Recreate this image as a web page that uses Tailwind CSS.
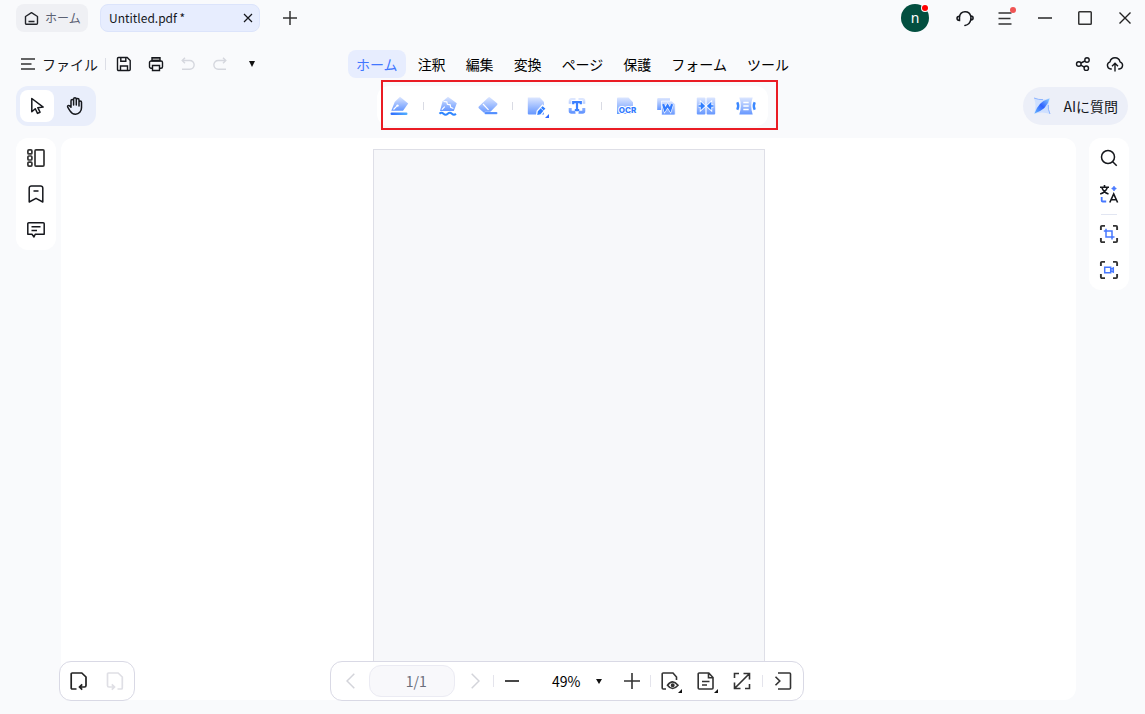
<!DOCTYPE html>
<html lang="ja">
<head>
  <meta charset="UTF-8" />
  <meta name="viewport" content="width=device-width, initial-scale=1.0"/>
  <title>Untitled.pdf</title>
  <script src="https://cdn.jsdelivr.net/npm/@tailwindcss/browser@4"></script>
</head>
<body class="h-screen overflow-hidden flex flex-col bg-[#f9fafc] text-[#15171c] text-sm font-['Noto_Sans_CJK_JP',sans-serif]">
  <!-- shared gradients for the toolbar icons -->
  <svg class="absolute size-0" aria-hidden="true">
    <defs>
      <linearGradient id="soft" x1="0" y1="0" x2="0" y2="1"><stop offset="0" stop-color="#dce6ff"/><stop offset="1" stop-color="#6697ff"/></linearGradient>
      <linearGradient id="deep" x1="0" y1="0" x2="1" y2="0"><stop offset="0" stop-color="#2f6bff"/><stop offset="1" stop-color="#52b0ff"/></linearGradient>
      <linearGradient id="leaf" x1="0" y1="1" x2="1" y2="0"><stop offset="0" stop-color="#63b4ff"/><stop offset=".5" stop-color="#2f62ff"/><stop offset="1" stop-color="#8fd0ff"/></linearGradient>
    </defs>
  </svg>

  <!-- title bar -->
  <header class="h-9 shrink-0 flex items-center justify-between pl-4">
    <div class="flex items-center">
      <button class="h-7 w-18 flex items-center gap-1.5 pl-2 rounded-lg bg-[#eff0f4] text-[#5b6173] text-xs">
        <svg class="size-[15px] text-[#22242a]" viewBox="0 0 15 15" fill="none" stroke="currentColor" stroke-width="1.4"><path d="M1.5 5.5 7.5 1.7l6 3.8v6.8a1 1 0 0 1-1 1h-10a1 1 0 0 1-1-1zM4.5 10.5h6" stroke-linejoin="round"/></svg>
        ホーム
      </button>
      <div class="h-7 w-40 ml-3 flex items-center justify-between pl-2 pr-1.5 rounded-lg border border-[#dce4fb] bg-[#e7edfe] text-xs">
        <span>Untitled.pdf *</span>
        <button aria-label="タブを閉じる"><svg class="size-[10px]" viewBox="0 0 10 10" fill="none" stroke="currentColor" stroke-width="1.2"><path d="m1 1 8 8M9 1 1 9"/></svg></button>
      </div>
      <button class="size-7 ml-4 grid place-items-center" aria-label="新しいタブ"><svg class="size-[14px]" viewBox="0 0 14 14" fill="none" stroke="#333" stroke-width="1.5"><path d="M7 0v14M0 7h14"/></svg></button>
    </div>
    <div class="flex items-center">
      <button class="relative size-7 mr-4 rounded-full bg-[#034f40] text-white font-['Noto_Sans',sans-serif]" aria-label="アカウント">n<span class="absolute top-px right-px size-1.5 rounded-full bg-[#ff0000] ring-1 ring-white"></span></button>
      <button class="w-10 h-9 grid place-items-center" aria-label="サポート">
        <svg class="size-[18px]" viewBox="0 0 18 18" fill="none" stroke="currentColor" stroke-width="1.5"><path d="M3.5 7.5a5.7 5.7 0 0 1 11.2-.4M14.9 10c-.5 3.400-2.600 6-6 6.500" stroke-linecap="round"/><path d="M3.500 7.200v4.200c-1.600 0-2.500-.8-2.500-2.100s.9-2.100 2.500-2.100zM14.900 6.900v4c1.400 0 2.200-.8 2.200-2s-.8-2-2.200-2z"/></svg>
      </button>
      <button class="relative w-10 h-9 grid place-items-center" aria-label="メニュー">
        <svg class="w-[14px] h-[13px]" viewBox="0 0 14 13" fill="none" stroke="#333" stroke-width="1.6"><path d="M.5 1h13M.5 6.500h12M.5 12h13"/></svg>
        <span class="absolute top-[7px] right-[9px] size-1.5 rounded-full bg-[#f05454]"></span>
      </button>
      <button class="w-10 h-9 grid place-items-center" aria-label="最小化"><svg class="size-[14px]" viewBox="0 0 14 14"><path d="M0 7h14" stroke="#333" stroke-width="1.6"/></svg></button>
      <button class="w-10 h-9 grid place-items-center" aria-label="最大化"><svg class="size-[14px]" viewBox="0 0 14 14"><rect x=".75" y=".75" width="12.500" height="12.500" rx=".8" fill="none" stroke="#333" stroke-width="1.500"/></svg></button>
      <button class="w-10 h-9 grid place-items-center" aria-label="閉じる"><svg class="size-[12px]" viewBox="0 0 12 12" fill="none" stroke="#222" stroke-width="1.4"><path d="m.5.5 11 11M11.500.5l-11 11"/></svg></button>
    </div>
  </header>

  <!-- menu row -->
  <div class="mt-3 h-8 shrink-0 grid grid-cols-[1fr_auto_1fr] items-center px-5">
    <div class="flex items-center">
      <button class="flex items-center gap-1.5">
        <svg class="w-4 h-3" viewBox="0 0 16 12" fill="none" stroke="#333" stroke-width="1.700"><path d="M1 1h14M1 6h10.500M1 11h14"/></svg>
        ファイル
      </button>
      <span class="w-px h-3 ml-[7px] mr-0.5 bg-[#dcdee6]"></span>
      <button class="size-8 grid place-items-center" aria-label="保存">
        <svg class="size-4" viewBox="0 0 16 16" fill="none" stroke="currentColor" stroke-width="1.400"><path d="M2.500 1.500h8.700l3 3v9a1 1 0 0 1-1 1H2.500a1 1 0 0 1-1-1v-11a1 1 0 0 1 1-1zM4.500 14.300V10h7v4.300M4.800 1.500v3.700h5V1.500"/></svg>
      </button>
      <button class="size-8 grid place-items-center" aria-label="印刷">
        <svg class="size-4" viewBox="0 0 16 16" fill="none" stroke="currentColor" stroke-width="1.400"><path d="M4.500 12.200H3a1.500 1.500 0 0 1-1.500-1.500V6.500A1.500 1.500 0 0 1 3 5h10a1.500 1.500 0 0 1 1.500 1.500v4.200a1.500 1.500 0 0 1-1.500 1.500h-1.500"/><path d="M4.500 9.500h7v5h-7z"/><path d="M4 4.700V1.800h8v2.900z" fill="#999"/></svg>
      </button>
      <button class="size-8 grid place-items-center text-[#d5d7de]" aria-label="元に戻す" disabled>
        <svg class="size-4" viewBox="0 0 16 16" fill="none" stroke="currentColor" stroke-width="1.400"><path d="M5 1.700 2.200 4.500 5 7.300M2.500 4.500h7.300a4.300 4.300 0 0 1 0 8.700H2"/></svg>
      </button>
      <button class="size-8 grid place-items-center text-[#d5d7de]" aria-label="やり直し" disabled>
        <svg class="size-4" viewBox="0 0 16 16" fill="none" stroke="currentColor" stroke-width="1.400"><path d="m11 1.700 2.800 2.800L11 7.300M13.500 4.500H6.200a4.300 4.300 0 0 0 0 8.700H14"/></svg>
      </button>
      <button class="size-8 grid place-items-center" aria-label="その他"><svg class="w-[6px] h-[6px]" viewBox="0 0 6 6"><path d="M0 0h6L3 6z" fill="#111"/></svg></button>
    </div>
    <nav class="flex items-center gap-1 text-black">
      <a href="#" class="h-7 leading-7 px-2 rounded-lg bg-[#e7edfe] text-[#4277ff]">ホーム</a>
      <a href="#" class="h-7 leading-7 px-2">注釈</a>
      <a href="#" class="h-7 leading-7 px-2">編集</a>
      <a href="#" class="h-7 leading-7 px-2">変換</a>
      <a href="#" class="h-7 leading-7 px-2">ページ</a>
      <a href="#" class="h-7 leading-7 px-2">保護</a>
      <a href="#" class="h-7 leading-7 px-2">フォーム</a>
      <a href="#" class="h-7 leading-7 px-2">ツール</a>
    </nav>
    <div class="-mr-1.5 flex justify-end">
      <button class="size-8 grid place-items-center" aria-label="共有">
        <svg class="size-4" viewBox="0 0 16 16" fill="none" stroke="currentColor" stroke-width="1.400"><circle cx="3.800" cy="8" r="2.300"/><circle cx="12" cy="4" r="2.200"/><circle cx="11.300" cy="12.200" r="2.200"/><path d="m5.900 7 4-2M5.800 9.200l3.500 2"/></svg>
      </button>
      <button class="size-8 grid place-items-center" aria-label="アップロード">
        <svg class="size-[18px]" viewBox="0 0 18 18" fill="none" stroke="currentColor" stroke-width="1.400"><path d="M5.800 14H4.700A3.700 3.700 0 0 1 4 6.800a5.100 5.100 0 0 1 10 0A3.700 3.700 0 0 1 13.300 14h-1.100M9 16.500V8.500M6 11.200l3-3 3 3"/></svg>
      </button>
    </div>
  </div>

  <!-- toolbar -->
  <div class="mt-1.5 h-10 shrink-0 grid grid-cols-[1fr_auto_1fr] items-center px-4">
    <div class="w-20 flex gap-1 p-1 rounded-xl bg-[#e9eefb]">
      <button class="w-[34px] h-8 grid place-items-center rounded-lg bg-white" aria-label="選択">
        <svg class="size-[18px]" viewBox="0 0 18 18" fill="none" stroke="currentColor" stroke-width="1.500" stroke-linejoin="round"><path d="M3.800 1.500v13.300l3.500-3.100 2.200 4.700 2.500-1.200-2.200-4.500 5.400-.6z"/></svg>
      </button>
      <button class="w-[34px] h-8 grid place-items-center" aria-label="手のひら">
        <svg class="size-5" viewBox="0 0 20 20" fill="none" stroke="currentColor" stroke-width="1.500" stroke-linecap="round" stroke-linejoin="round"><path d="M6 10.500V4.800a1.300 1.300 0 0 1 2.600 0V9M8.600 9V3a1.300 1.300 0 0 1 2.700 0v6M11.300 9V3.800a1.300 1.300 0 0 1 2.700 0V10M14 9.500V6.300a1.250 1.250 0 0 1 2.500 0v5.500a6.200 6.200 0 0 1-6 6.400c-2.700 0-4.300-1.200-5.500-3.300L2.700 11.200c-.6-1.200.9-2.300 2-1.300L6 11.300"/></svg>
      </button>
    </div>

    <div class="relative h-10 flex items-center gap-2 px-1.5 rounded-xl bg-white">
      <button class="size-8 grid place-items-center" aria-label="ハイライト">
        <svg class="size-5" viewBox="0 0 20 20"><path d="m11 .8 8.200 6.700-5.200 7.300H2.300L5.700 6z" fill="url(#soft)"/><path d="m4.500 13.500 3.300-3.300" stroke="#fff" stroke-width="1.200"/><circle cx="8.500" cy="9.600" r="1.200" fill="#fff"/><rect x="1.500" y="16.600" width="17" height="2.400" rx="1.200" fill="url(#deep)"/></svg>
      </button>
      <span class="w-px h-2 bg-[#d9dbe4]"></span>
      <button class="size-8 grid place-items-center" aria-label="波線">
        <svg class="size-5" viewBox="0 0 20 20"><path d="m10 .8 8.800 6.500-3 7.700H2L4.500 5.500z" fill="url(#soft)"/><path d="m5.500 5.500 3.300.4.600 2.400 2.800.5.500 2.600 2.700 1.100M3.800 13.700l3-3" fill="none" stroke="#fff" stroke-width="1.200"/><path d="M1.500 17.800c1.200-1.300 2.600-1.300 4 0s2.800 1.300 4.200 0 2.800-1.300 4.200 0 2.800 1.300 4 0" fill="none" stroke="#2f86ff" stroke-width="2"/></svg>
      </button>
      <button class="size-8 grid place-items-center" aria-label="消しゴム">
        <svg class="size-5" viewBox="0 0 20 20"><path d="M10.300 1.400q.9-.8 1.800 0l7 5.900q.8.800 0 1.600L11 17.300H6.500l-5.700-5q-.8-.9 0-1.700z" fill="url(#soft)"/><path d="m5 8 5.500 5.800" stroke="#fff" stroke-width="1.200"/><rect x="6.500" y="15.900" width="13" height="2.300" rx="1" fill="#3c80ff" stroke="#fff" stroke-width=".4"/></svg>
      </button>
      <span class="w-px h-2 bg-[#d9dbe4]"></span>
      <button class="relative size-8 grid place-items-center" aria-label="編集">
        <svg class="size-5" viewBox="0 0 20 20"><path d="M.8 1.500h12L17 6v12.500H1.800a1 1 0 0 1-1-1z" fill="url(#soft)"/><path d="m9.500 19.800.7-4.800 5.300-5.800 3.800 3.200-5.500 6.400z" fill="#2f7dff" stroke="#fff" stroke-width="1.300"/><path d="m13.200 11.500 3.600 3.400" stroke="#fff" stroke-width=".8"/></svg>
        <svg class="absolute right-1 bottom-1 size-1" viewBox="0 0 4 4"><path d="M4 0v4H0z" fill="#2f6bff"/></svg>
      </button>
      <button class="size-8 grid place-items-center" aria-label="テキスト">
        <svg class="size-5" viewBox="0 0 20 20"><path d="M3.200 7.800V4.800a1.300 1.300 0 0 1 1.300-1.300h4M11.500 3.500h4a1.300 1.300 0 0 1 1.300 1.300v3M16.800 12v3a1.300 1.300 0 0 1-1.300 1.300h-4M8.500 16.300h-4A1.300 1.300 0 0 1 3.200 15v-3" fill="none" stroke="url(#soft)" stroke-width="3"/><path d="M6.500 8V6h7v2M10 6v8M8.200 14.200h3.600" fill="none" stroke="#fff" stroke-width="4"/><path d="M6.200 8.300V6.200h7.600v2.100M10 6.200v8M7.800 14.200h4.400" fill="none" stroke="#3b80ff" stroke-width="2.200"/></svg>
      </button>
      <span class="w-px h-2 bg-[#d9dbe4]"></span>
      <button class="size-8 grid place-items-center" aria-label="OCR">
        <svg class="size-5 overflow-visible" viewBox="0 0 20 20"><path d="M2 1.500h10.500L17 6.200V18H1V2.500a1 1 0 0 1 1-1z" fill="url(#soft)"/><text x="11.500" y="17" text-anchor="middle" font-family="Inter, sans-serif" font-size="8" font-weight="800" fill="#327bff" stroke="#fff" stroke-width="2" paint-order="stroke">OCR</text></svg>
      </button>
      <button class="size-8 grid place-items-center" aria-label="Wordに変換">
        <svg class="size-5" viewBox="0 0 20 20"><path d="M2.200 2H14v12H1.200V3a1 1 0 0 1 1-1z" fill="url(#soft)"/><path d="M5.500 5h10.200L19.200 8v10a1 1 0 0 1-1 1H5.500z" fill="url(#soft)" stroke="#fff" stroke-width=".7"/><path d="m7.200 8.200 1.700 5.600 2.700-4.300 2.700 4.300L16 8.200" fill="none" stroke="#fff" stroke-width="3.400"/><path d="m7.200 8.200 1.700 5.600 2.700-4.300 2.700 4.300L16 8.200" fill="none" stroke="#347cff" stroke-width="2.300"/></svg>
      </button>
      <button class="size-8 grid place-items-center" aria-label="結合">
        <svg class="size-5" viewBox="0 0 20 20"><rect x=".8" y="1.500" width="8.600" height="17" rx="1" fill="url(#soft)"/><rect x="10.600" y="1.500" width="8.600" height="17" rx="1" fill="url(#soft)"/><path d="M2.500 10h3.200M5.300 7.300 8.200 10l-2.900 2.700zM17.500 10h-3.200M14.700 7.300 11.800 10l2.900 2.700z" fill="#fff" stroke="#fff" stroke-width="3"/><path d="M2.500 10h3.200M5.300 7.300 8.200 10l-2.900 2.700zM17.500 10h-3.200M14.700 7.300 11.800 10l2.900 2.700z" fill="#2f7dff" stroke="#2f7dff" stroke-width="1.300"/></svg>
      </button>
      <button class="size-8 grid place-items-center" aria-label="圧縮">
        <svg class="size-5" viewBox="0 0 20 20"><path d="M3.300 1.500h13.400q-3 8.500 0 17H3.300q3-8.500 0-17z" fill="url(#soft)"/><path d="M7.300 6.500h5.400M7.300 10h5.400M7.300 13.500h5.400" stroke="#fff" stroke-width="1.300"/><path d="M1.300 6.300q1.800 3.700 0 7.400M18.700 6.300q-1.800 3.700 0 7.400" fill="none" stroke="#3b88ff" stroke-width="2.400"/></svg>
      </button>
      <!-- highlight frame around the tools -->
      <div class="absolute -top-1.5 -bottom-1 left-1 -right-2.5 border-2 border-[#ea1c24] pointer-events-none"></div>
    </div>

    <button class="h-[38px] mr-px justify-self-end flex items-center gap-3 px-2.5 rounded-full bg-[#eceff8]">
      <svg class="size-[18px]" viewBox="0 0 18 18"><path d="M1 1q8 3 16 0-3 8 0 16-8-3-16 0Q4 9 1 1z" fill="#cfe0ff"/><path d="M1 1q5 2 9 1.600M17 17q-2.300-5-1.700-9" fill="none" stroke="#8fb5ff"/><path d="M16.500 1.500Q14.500 12 1.500 16.500 5.500 4.500 16.500 1.500z" fill="url(#leaf)"/></svg>
      AIに質問
    </button>
  </div>

  <!-- workspace -->
  <main class="mt-3 mb-3.5 flex-1 min-h-0 flex items-start px-4">
    <aside class="w-10 shrink-0 flex flex-col items-center py-0.5 rounded-xl bg-white">
      <button class="size-9 grid place-items-center" aria-label="サムネイル">
        <svg class="size-5" viewBox="0 0 20 20" fill="none" stroke="#333" stroke-width="1.700"><rect x="9" y="1.900" width="9" height="16.200" rx="1"/><rect x="1.900" y="1.900" width="4" height="4" rx="1"/><rect x="1.900" y="8" width="4" height="4" rx="1"/><rect x="1.900" y="14.100" width="4" height="4" rx="1"/></svg>
      </button>
      <button class="size-9 grid place-items-center" aria-label="ブックマーク">
        <svg class="size-5" viewBox="0 0 20 20" fill="none" stroke="currentColor" stroke-width="1.500" stroke-linejoin="round"><path d="M3.200 18V4A2.200 2.200 0 0 1 5.400 2h9.200A2.200 2.200 0 0 1 16.800 4v14L10 14.300zM7.500 7h5"/></svg>
      </button>
      <button class="size-9 grid place-items-center" aria-label="コメント">
        <svg class="size-5" viewBox="0 0 20 20" fill="none" stroke="currentColor" stroke-width="1.500" stroke-linejoin="round"><path d="M2.800 2.800h14.400a1 1 0 0 1 1 1v10.400h-9L8 17l-2-2.800H1.800V3.800a1 1 0 0 1 1-1zM5.500 6.800h9M5.500 10.500h5.500"/></svg>
      </button>
    </aside>

    <section class="relative ml-[5px] mr-[13px] h-full flex-1 rounded-xl bg-white">
      <div class="h-full pt-[11px] overflow-hidden">
        <div class="mx-auto h-full w-[392px] border border-[#dedfe7] bg-[#f7f8fa]"></div>
      </div>

      <div class="absolute -left-0.5 -bottom-px w-19 h-10 flex items-center px-px rounded-xl border border-[#d9d9e5] bg-white">
        <button class="size-9 grid place-items-center text-[#222]" aria-label="前のビュー">
          <svg class="size-5" viewBox="0 0 20 20" fill="none" stroke="currentColor" stroke-width="1.700"><path d="M7.500 18H3.200a1 1 0 0 1-1-1V3a1 1 0 0 1 1-1h9.600L17 6v8.500a1.500 1.500 0 0 1-1.500 1.500H11M13.200 13.300 10.500 16l2.700 2.700"/></svg>
        </button>
        <button class="size-9 grid place-items-center text-[#dfdfe5]" aria-label="次のビュー" disabled>
          <svg class="size-5" viewBox="0 0 20 20" fill="none" stroke="currentColor" stroke-width="1.700"><path d="M12.500 18h3.800a1 1 0 0 0 1-1V6l-4.200-4H3.500a1 1 0 0 0-1 1v11.500A1.500 1.500 0 0 0 4 16h5M6.800 13.300 9.500 16l-2.700 2.700"/></svg>
        </button>
      </div>

      <!-- page and zoom bar -->
      <div class="absolute inset-x-0 -bottom-px mr-1 flex justify-center pointer-events-none">
        <div class="h-10 w-[474px] flex items-center pl-0.5 rounded-xl border border-[#d9d9e5] bg-white pointer-events-auto">
          <button class="w-9 h-8 grid place-items-center text-[#d3d4da]" aria-label="前のページ" disabled><svg class="w-[9px] h-[16px]" viewBox="0 0 9 16" fill="none" stroke="currentColor" stroke-width="1.500"><path d="M8.300.7 1 8l7.300 7.300"/></svg></button>
          <input class="w-[86px] h-8 ml-px pl-4 pr-2 rounded-xl border border-[#ebebf3] bg-[#f8f8fb] text-center text-[#6a6e7c]" value="1/1" aria-label="ページ番号"/>
          <button class="w-10 h-8 grid place-items-center text-[#d3d4da]" aria-label="次のページ" disabled><svg class="w-[9px] h-[16px]" viewBox="0 0 9 16" fill="none" stroke="currentColor" stroke-width="1.500"><path d="M.7.7 8 8 .7 15.300"/></svg></button>
          <span class="w-px h-3 -ml-0.5 bg-[#e4e4ec]"></span>
          <button class="w-9 h-8 grid place-items-center" aria-label="縮小"><svg class="size-[14px]" viewBox="0 0 14 14"><path d="M0 7h14" stroke="#333" stroke-width="1.800"/></svg></button>
          <button class="h-8 ml-[22px] pr-2 flex items-center gap-4 text-black" aria-label="ズーム 49%">49%<svg class="w-[6px] h-[5px]" viewBox="0 0 6 5"><path d="M0 0h6L3 5z" fill="#111"/></svg></button>
          <button class="w-9 h-8 ml-1 grid place-items-center" aria-label="拡大"><svg class="size-4" viewBox="0 0 16 16" fill="none" stroke="#333" stroke-width="1.600"><path d="M8 0v16M0 8h16"/></svg></button>
          <span class="w-px h-3 bg-[#e4e4ec]"></span>
          <button class="relative w-9 h-8 ml-px grid place-items-center" aria-label="表示モード">
            <svg class="size-5" viewBox="0 0 20 20" fill="none" stroke="#333" stroke-width="1.600"><path d="M6 18H3.200a1 1 0 0 1-1-1V3a1 1 0 0 1 1-1H13l3.500 4v3"/><path d="M7.500 14.200q5-6.700 10.500 0-5.500 6.500-10.500 0z"/><circle cx="12.700" cy="14.200" r="1.200" fill="#333"/></svg>
            <svg class="absolute right-1.5 bottom-1 size-1" viewBox="0 0 4 4"><path d="M4 0v4H0z" fill="#111"/></svg>
          </button>
          <button class="relative w-9 h-8 grid place-items-center" aria-label="ページ表示">
            <svg class="size-5" viewBox="0 0 20 20" fill="none" stroke="#333" stroke-width="1.600"><path d="M3.200 2h9.600L17 6.500V17a1 1 0 0 1-1 1H3.200a1 1 0 0 1-1-1V3a1 1 0 0 1 1-1zM12.500 2v4.800H17M6 10.500h7.500M6 14h5"/></svg>
            <svg class="absolute right-1.5 bottom-1 size-1" viewBox="0 0 4 4"><path d="M4 0v4H0z" fill="#111"/></svg>
          </button>
          <button class="w-9 h-8 grid place-items-center" aria-label="全画面">
            <svg class="size-5" viewBox="0 0 20 20" fill="none" stroke="#333" stroke-width="1.600"><path d="m3 17 14-14M11.500 2.500h6v6M8.500 17.500h-6v-6M2.500 7V2.500H7M13 17.500h4.500V13"/></svg>
          </button>
          <span class="w-px h-3 ml-0.5 bg-[#e4e4ec]"></span>
          <button class="w-10 h-8 grid place-items-center" aria-label="バーを閉じる">
            <svg class="size-5" viewBox="0 0 20 20" fill="none" stroke="#333" stroke-width="1.600"><path d="M5 2h11.500a1 1 0 0 1 1 1v14a1 1 0 0 1-1 1H5M2.500 5.800 6.800 10l-4.300 4.200"/></svg>
          </button>
        </div>
      </div>
    </section>

    <aside class="w-10 shrink-0 flex flex-col items-center py-0.5 rounded-xl bg-white">
      <button class="size-9 grid place-items-center" aria-label="検索"><svg class="size-5" viewBox="0 0 20 20" fill="none" stroke="currentColor" stroke-width="1.500"><circle cx="9" cy="9" r="6.500"/><path d="m13.700 13.700 4 4"/></svg></button>
      <button class="size-9 grid place-items-center" aria-label="翻訳">
        <svg class="size-5" viewBox="0 0 20 20" fill="none" stroke="currentColor" stroke-width="1.600"><path d="M1 3.300h9M5.500 1v2.300M3 3.700q1.500 4.600 6.500 6.300M8.200 3.700Q6.500 8.300 1.200 10M10.800 18.500l3.900-8.500 3.900 8.500M12 15.700h5.400"/><path d="M2.700 13v3.500a1 1 0 0 0 1 1h3.500" stroke="#4778ff" stroke-width="1.800"/><path d="m15 2.300.8 1.500 1.500.7-1.500.8L15 6.800l-.8-1.500-1.500-.8 1.500-.7z" fill="#4778ff" stroke="#4778ff" stroke-width="1"/></svg>
      </button>
      <span class="w-4 h-px mt-0.5 mb-px bg-[#e2e6f2]"></span>
      <button class="size-9 grid place-items-center" aria-label="切り抜き">
        <svg class="size-5" viewBox="0 0 20 20" fill="none" stroke="#333" stroke-width="1.900"><path d="M1.900 6V2.900a1 1 0 0 1 1-1H6M14 1.900h3.100a1 1 0 0 1 1 1V6M18.100 14v3.100a1 1 0 0 1-1 1H14M6 18.100H2.900a1 1 0 0 1-1-1V14"/><path d="M7 4.800V13h8.500M4.800 7H13v8.500" stroke="#4778ff" stroke-width="1.500"/></svg>
      </button>
      <button class="size-9 grid place-items-center" aria-label="録画">
        <svg class="size-5" viewBox="0 0 20 20" fill="none" stroke="#333" stroke-width="1.900"><path d="M1.900 6V2.900a1 1 0 0 1 1-1H6M14 1.900h3.100a1 1 0 0 1 1 1V6M18.100 14v3.100a1 1 0 0 1-1 1H14M6 18.100H2.900a1 1 0 0 1-1-1V14"/><path d="M5.700 7.300h6v5.400h-6zM11.700 9.300l2.600-1.300v4l-2.600-1.300z" stroke="#4778ff" stroke-width="1.500"/></svg>
      </button>
    </aside>
  </main>
</body>
</html>
